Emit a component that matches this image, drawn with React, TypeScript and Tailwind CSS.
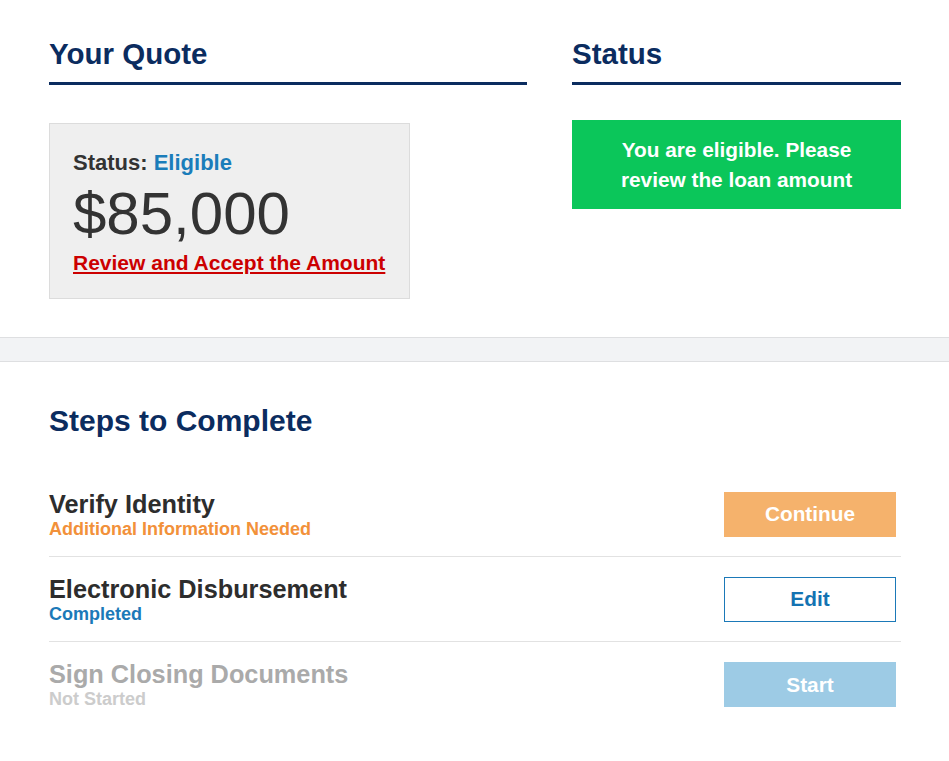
import React from "react";

const font = { fontFamily: '"Liberation Sans", Arial, sans-serif' };

function Heading({ children }: { children: React.ReactNode }) {
  return (
    <h2 className="text-[29.5px] leading-[34px] pt-[2px] font-bold text-[#0b2c5f] pb-[11px] border-b-[3px] border-[#0b2c5f]">
      {children}
    </h2>
  );
}

type Step = {
  title: string;
  sub: string;
  titleCls: string;
  subCls: string;
  btn: string;
  btnCls: string;
};

const steps: Step[] = [
  {
    title: "Verify Identity",
    sub: "Additional Information Needed",
    titleCls: "text-[#2d2d2d]",
    subCls: "text-[#f2913a]",
    btn: "Continue",
    btnCls: "bg-[#f5b26c] text-white",
  },
  {
    title: "Electronic Disbursement",
    sub: "Completed",
    titleCls: "text-[#2d2d2d]",
    subCls: "text-[#1b79b8]",
    btn: "Edit",
    btnCls: "bg-white border border-[#1b79b8] text-[#1473b2]",
  },
  {
    title: "Sign Closing Documents",
    sub: "Not Started",
    titleCls: "text-[#aaaaaa]",
    subCls: "text-[#cccccc]",
    btn: "Start",
    btnCls: "bg-[#9dcbe5] text-white",
  },
];

export default function App() {
  return (
    <div className="min-h-[761px] bg-white" style={font}>
      {/* Top section */}
      <div className="pl-[49px] pr-[48px] pt-[35px] pb-[38px] flex gap-[45px]">
        <div className="w-[478px]">
          <Heading>Your Quote</Heading>
          <div className="mt-[38px] w-[361px] bg-[#efefef] border border-[#dcdcdc] px-[23px] pt-[26px] pb-[23px]">
            <div className="text-[22px] leading-[26px] font-bold text-[#333333]">
              Status: <span className="text-[#1b7dba]">Eligible</span>
            </div>
            <div className="mt-[8px] text-[60px] leading-[60px] text-[#333333]">$85,000</div>
            <a
              href="#"
              className="block mt-[7px] text-[21px] leading-[24px] font-bold text-[#cc0000] underline"
            >
              Review and Accept the Amount
            </a>
          </div>
        </div>
        <div className="w-[329px]">
          <Heading>Status</Heading>
          <div className="mt-[35px] bg-[#0bc65a] px-[40px] py-[15px] text-center text-white text-[20.8px] leading-[29.5px] font-bold">
            You are eligible. Please review the loan amount
          </div>
        </div>
      </div>

      {/* Band */}
      <div className="h-[25px] bg-[#f2f3f5] border-t border-b border-[#dedfe1]" />

      {/* Steps */}
      <div className="pl-[49px] pr-[48px] pt-[41px]">
        <h2 className="text-[30px] leading-[36px] font-bold text-[#0b2c5f]">Steps to Complete</h2>
        <div className="mt-[33px]">
          {steps.map((s) => (
            <div
              key={s.title}
              className="h-[85px] flex items-center justify-between pr-[5px] border-b border-[#e2e2e2] last:border-b-0"
            >
              <div className="pt-[1px]">
                <div className={`text-[25.3px] leading-[28px] font-bold ${s.titleCls}`}>{s.title}</div>
                <div className={`text-[18px] leading-[22px] font-bold ${s.subCls}`}>{s.sub}</div>
              </div>
              <button
                className={`w-[172px] h-[45px] flex items-center justify-center text-[20.8px] font-bold ${s.btnCls}`}
              >
                {s.btn}
              </button>
            </div>
          ))}
        </div>
      </div>
    </div>
  );
}
